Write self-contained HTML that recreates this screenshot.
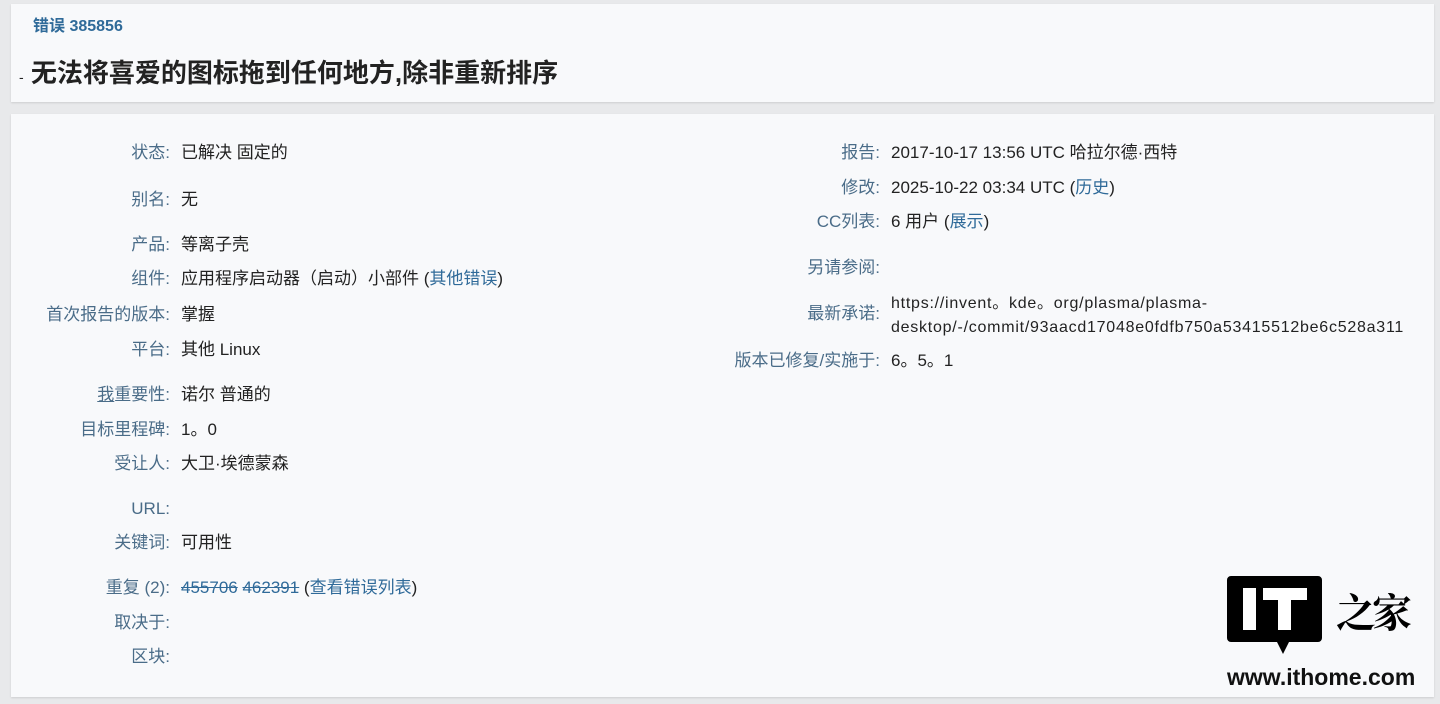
<!DOCTYPE html>
<html><head><meta charset="utf-8"><style>
body{margin:0;width:1440px;height:704px;background:#e8e9eb;font-family:"Liberation Sans","Noto Sans CJK SC",sans-serif;position:relative;overflow:hidden;}
.p{position:absolute;background:#f8f9fb;box-shadow:0 1px 2px rgba(0,0,0,.12);}
.t{position:absolute;font-size:17px;line-height:20px;white-space:nowrap;color:#222;}
.l{position:absolute;font-size:17px;line-height:20px;white-space:nowrap;color:#4a6c88;text-align:right;}
a{color:#2f6a99;text-decoration:none;}
s{color:#2f6a99;}
</style></head><body>
<div class="p" style="left:11px;top:4px;width:1423px;height:98px;"></div>
<div class="p" style="left:11px;top:114px;width:1423px;height:583px;"></div>
<div class="t" style="left:33px;top:17px;color:#2f6a99;font-weight:bold;font-size:16px;">错误 385856</div>
<div class="t" style="left:19px;top:56px;font-size:26px;line-height:34px;font-weight:bold;color:#222;"><span style="font-size:14px;font-weight:normal">-</span> 无法将喜爱的图标拖到任何地方,除非重新排序</div>

<div class="l" style="right:1270px;top:143px">状态:</div><div class="t" style="left:181px;top:143px">已解决 固定的</div>
<div class="l" style="right:1270px;top:190px">别名:</div><div class="t" style="left:181px;top:190px">无</div>
<div class="l" style="right:1270px;top:235px">产品:</div><div class="t" style="left:181px;top:235px">等离子壳</div>
<div class="l" style="right:1270px;top:269px">组件:</div><div class="t" style="left:181px;top:269px">应用程序启动器（启动）小部件 (<a>其他错误</a>)</div>
<div class="l" style="right:1270px;top:305px">首次报告的版本:</div><div class="t" style="left:181px;top:305px">掌握</div>
<div class="l" style="right:1270px;top:340px">平台:</div><div class="t" style="left:181px;top:340px">其他 Linux</div>
<div class="l" style="right:1270px;top:385px"><u>我</u>重要性:</div><div class="t" style="left:181px;top:385px">诺尔 普通的</div>
<div class="l" style="right:1270px;top:420px">目标里程碑:</div><div class="t" style="left:181px;top:420px">1。0</div>
<div class="l" style="right:1270px;top:454px">受让人:</div><div class="t" style="left:181px;top:454px">大卫·埃德蒙森</div>
<div class="l" style="right:1270px;top:499px">URL:</div>
<div class="l" style="right:1270px;top:533px">关键词:</div><div class="t" style="left:181px;top:533px">可用性</div>
<div class="l" style="right:1270px;top:578px">重复 (2):</div><div class="t" style="left:181px;top:578px"><s>455706</s> <s>462391</s> (<a>查看错误列表</a>)</div>
<div class="l" style="right:1270px;top:613px">取决于:</div>
<div class="l" style="right:1270px;top:647px">区块:</div>

<div class="l" style="right:560px;top:143px">报告:</div><div class="t" style="left:891px;top:143px">2017-10-17 13:56 UTC 哈拉尔德·西特</div>
<div class="l" style="right:560px;top:178px">修改:</div><div class="t" style="left:891px;top:178px">2025-10-22 03:34 UTC (<a>历史</a>)</div>
<div class="l" style="right:560px;top:212px">CC列表:</div><div class="t" style="left:891px;top:212px">6 用户 (<a>展示</a>)</div>
<div class="l" style="right:560px;top:258px">另请参阅:</div>
<div class="l" style="right:560px;top:304px">最新承诺:</div><div class="t" style="left:891px;top:292px;line-height:24px;font-size:16px;letter-spacing:0.75px">https://invent。kde。org/plasma/plasma-<br>desktop/-/commit/93aacd17048e0fdfb750a53415512be6c528a311</div>
<div class="l" style="right:560px;top:351px">版本已修复/实施于:</div><div class="t" style="left:891px;top:351px">6。5。1</div>

<svg style="position:absolute;left:1227px;top:576px" width="95" height="80" viewBox="0 0 95 80">
<path d="M4 0H91a4 4 0 0 1 4 4V62a4 4 0 0 1-4 4H62L56 78 50 66H4a4 4 0 0 1-4-4V4a4 4 0 0 1 4-4Z" fill="#000"/>
<rect x="16" y="12" width="13" height="42" fill="#fff"/>
<rect x="36" y="12" width="44" height="12" fill="#fff"/>
<rect x="51" y="12" width="13" height="42" fill="#fff"/>
</svg>
<div class="t" style="left:1336px;top:586px;font-size:40px;line-height:50px;letter-spacing:-4px;font-family:'Noto Serif CJK SC',serif;font-weight:bold;color:#000">之家</div>
<div class="t" style="left:1227px;top:664px;font-size:23px;line-height:26px;font-weight:bold;color:#111">www.ithome.com</div>
</body></html>
